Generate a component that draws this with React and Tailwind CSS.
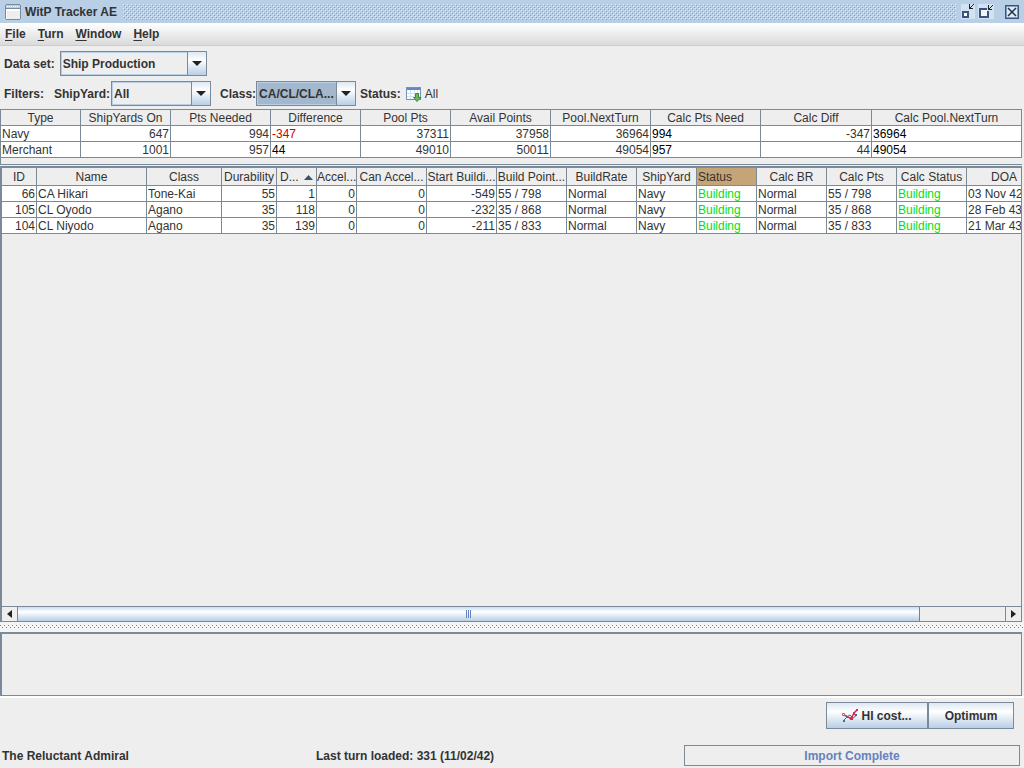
import { useState } from 'react';

const POOL_COLUMNS = [
    { label: 'Type', width: 'w-[80px]' },
    { label: 'ShipYards On', width: 'w-[90px]', align: 'right' },
    { label: 'Pts Needed', width: 'w-[100px]', align: 'right' },
    { label: 'Difference', width: 'w-[90px]' },
    { label: 'Pool Pts', width: 'w-[90px]', align: 'right' },
    { label: 'Avail Points', width: 'w-[100px]', align: 'right' },
    { label: 'Pool.NextTurn', width: 'w-[100px]', align: 'right' },
    { label: 'Calc Pts Need', width: 'w-[110px]', color: 'text-black' },
    { label: 'Calc Diff', width: 'w-[111px]', align: 'right' },
    { label: 'Calc Pool.NextTurn', width: '', color: 'text-black' },
];

const POOL_ROWS = [
    ['Navy', '647', '994', '-347', '37311', '37958', '36964', '994', '-347', '36964'],
    ['Merchant', '1001', '957', '44', '49010', '50011', '49054', '957', '44', '49054'],
];

const SHIP_COLUMNS = [
    { label: 'ID', width: 'w-[35px]', align: 'right' },
    { label: 'Name', width: 'w-[110px]' },
    { label: 'Class', width: 'w-[75px]' },
    { label: 'Durability', width: 'w-[55px]', align: 'right' },
    { label: 'D...', width: 'w-[40px]', align: 'right', sorted: true },
    { label: 'Accel...', width: 'w-[40px]', align: 'right' },
    { label: 'Can Accel...', width: 'w-[70px]', align: 'right' },
    { label: 'Start Buildi...', width: 'w-[70px]', align: 'right' },
    { label: 'Build Point...', width: 'w-[70px]' },
    { label: 'BuildRate', width: 'w-[70px]' },
    { label: 'ShipYard', width: 'w-[60px]' },
    { label: 'Status', width: 'w-[60px]', color: 'text-[#00e020]', filtered: true },
    { label: 'Calc BR', width: 'w-[70px]' },
    { label: 'Calc Pts', width: 'w-[70px]' },
    { label: 'Calc Status', width: 'w-[70px]', color: 'text-[#00e020]' },
    { label: 'DOA', width: 'w-[75px]' },
];

const SHIP_ROWS = [
    ['66', 'CA Hikari', 'Tone-Kai', '55', '1', '0', '0', '-549', '55 / 798', 'Normal', 'Navy', 'Building', 'Normal', '55 / 798', 'Building', '03 Nov 42'],
    ['105', 'CL Oyodo', 'Agano', '35', '118', '0', '0', '-232', '35 / 868', 'Normal', 'Navy', 'Building', 'Normal', '35 / 868', 'Building', '28 Feb 43'],
    ['104', 'CL Niyodo', 'Agano', '35', '139', '0', '0', '-211', '35 / 833', 'Normal', 'Navy', 'Building', 'Normal', '35 / 833', 'Building', '21 Mar 43'],
];

const MENUS = ['File', 'Turn', 'Window', 'Help'];

function TitleBar() {
    return (
        <header className="flex h-[23px] items-center bg-[#b8cfe5] pl-[5px] pr-1">
            <svg width="16" height="16" viewBox="0 0 16 16" shapeRendering="crispEdges" aria-hidden="true">
                <path d="M1 0h14v1h1v14h-1v1H1v-1H0V1h1z" fill="#7a8a99" />
                <rect x="1" y="1" width="14" height="3" fill="#b8cfe5" />
                <path d="M2 2.500h1M4 2.500h1M6 2.500h1M8 2.500h1M10 2.500h1M12 2.500h1" stroke="#fff" />
                <rect x="1" y="5" width="14" height="10" fill="#fff" />
                <rect x="2" y="7" width="13" height="8" fill="#eee" />
            </svg>
            <h1 className="ml-1 text-[12px] font-bold leading-4">WitP Tracker AE</h1>
            {/* drag bumps */}
            <div className="ml-[6px] mr-1 h-4 flex-1 [background-image:conic-gradient(from_270deg_at_1px_1px,#e4eefa_90deg,transparent_0),conic-gradient(from_270deg_at_1px_1px,#e4eefa_90deg,transparent_0),conic-gradient(from_270deg_at_1px_1px,#7f9fcb_90deg,transparent_0),conic-gradient(from_270deg_at_1px_1px,#7f9fcb_90deg,transparent_0)] [background-position:0_0,2px_2px,1px_1px,3px_3px] [background-size:4px_4px]" />
            <div className="flex items-center">
                <button type="button" aria-label="Minimize">
                    <svg width="16" height="16" viewBox="0 0 16 16" shapeRendering="crispEdges">
                        <rect x="1" y="0" width="14" height="15" fill="#d3e2f2" />
                        <rect x="3" y="8" width="5" height="5" fill="#fff" stroke="#39537f" strokeWidth="2" />
                        <path d="M9 0h1v3h1v-1h1v-1h1v-1h1v1h-1v1h-1v1h-1v1h2v1h-4z" fill="#222" />
                    </svg>
                </button>
                <button type="button" aria-label="Maximize" className="ml-[2px]">
                    <svg width="16" height="16" viewBox="0 0 16 16" shapeRendering="crispEdges">
                        <rect x="0" y="0" width="16" height="15" fill="#d3e2f2" />
                        <path d="M2 5h7M2 4v10M1 13h10M10 14V7" fill="none" stroke="#39537f" strokeWidth="2" />
                        <rect x="3" y="6" width="6" height="6" fill="#f2f6fb" />
                        <path d="M10 1h1v3h1v-1h1v-1h1v-1h1v1h-1v1h-1v1h-1v1h2v1h-4z" fill="#222" />
                    </svg>
                </button>
                <button type="button" aria-label="Close" className="ml-[10px]">
                    <svg width="16" height="16" viewBox="0 0 16 16" shapeRendering="crispEdges">
                        <rect x="1.500" y="1.500" width="13" height="13" fill="#dfeaf5" stroke="#39537f" />
                        <rect x="2.500" y="2.500" width="11" height="11" fill="none" stroke="#7f9bbd" />
                        <path d="M4 4l8 8M12 4l-8 8" stroke="#222f3f" strokeWidth="1.500" shapeRendering="auto" />
                    </svg>
                </button>
            </div>
        </header>
    );
}

function MenuBar() {
    return (
        <nav className="flex h-[23px] items-center gap-3 border-b border-[#ccc] bg-linear-to-b from-white to-[#dadada] pl-[5px]">
            {MENUS.map(menu => (
                <button key={menu} type="button" className="font-bold leading-4">
                    <span className="underline underline-offset-2">{menu[0]}</span>{menu.slice(1)}
                </button>
            ))}
        </nav>
    );
}

function ComboBox({ id, options, className, focused }) {
    const [value, setValue] = useState(options[0]);
    return (
        <div className={`relative h-[25px] border border-[#7a8a99] ${className}`}>
            <select
                id={id}
                value={value}
                onChange={e => setValue(e.target.value)}
                className={`h-full w-full appearance-none border border-[#b8cfe5] pl-px pr-5 font-bold outline-none ${focused ? 'bg-[#a3b8cc]' : 'bg-[#eee]'}`}
            >
                {options.map(option => <option key={option}>{option}</option>)}
            </select>
            <span className="pointer-events-none absolute inset-y-0 right-0 flex w-[19px] items-center justify-center border-l border-[#7a8a99] bg-linear-to-b from-[#dde8f3] via-white via-35% to-[#b8cfe5]">
                <svg width="10" height="5" viewBox="0 0 10 5" aria-hidden="true">
                    <path d="M0 0h10L5 5z" fill="#222" />
                </svg>
            </span>
        </div>
    );
}

function DataTable({ columns, rows, label, headHeight, className }) {
    return (
        <table aria-label={label} className={`table-fixed border-separate border-spacing-0 ${className}`}>
            <thead>
                <tr>
                    {columns.map(col => (
                        <th
                            key={col.label}
                            scope="col"
                            className={`overflow-hidden whitespace-nowrap border-b border-r border-[#7a8a99] px-0 pt-[2px] pb-0 font-normal leading-[13px] ${headHeight} ${col.width} ${col.filtered ? 'bg-[#c5a577] pl-px text-left' : 'bg-[#eee] text-center'}`}
                        >
                            {col.sorted ? (
                                <span className="flex items-center justify-between px-[3px]">
                                    {col.label}
                                    <svg width="9" height="5" viewBox="0 0 9 5" aria-hidden="true">
                                        <path d="M0 5L4.500 0L9 5z" fill="#39536f" />
                                    </svg>
                                </span>
                            ) : col.label}
                        </th>
                    ))}
                </tr>
            </thead>
            <tbody>
                {rows.map(row => (
                    <tr key={row[0]}>
                        {row.map((cell, i) => {
                            const col = columns[i];
                            let color = col.color || '';
                            if (col.label === 'Difference') color = Number(cell) < 0 ? 'text-[#cc0000]' : 'text-black';
                            return (
                                <td
                                    key={col.label}
                                    className={`h-4 whitespace-nowrap border-b border-r border-[#7a8a99] bg-white px-px pt-px pb-0 leading-[14px] ${col.align === 'right' ? 'text-right' : 'text-left'} ${color}`}
                                >
                                    {cell}
                                </td>
                            );
                        })}
                    </tr>
                ))}
            </tbody>
        </table>
    );
}

function ScrollBar() {
    return (
        <div className="flex h-4 border-y border-[#7a8a99] bg-[#eee]">
            <button type="button" aria-label="Scroll left" className="flex w-4 items-center justify-center border-r border-[#7a8a99]">
                <svg width="5" height="8" viewBox="0 0 5 8"><path d="M5 0v8L0 4z" fill="#222" /></svg>
            </button>
            <div className="flex flex-1 pr-[85px]">
                <div className="flex flex-1 items-center justify-center gap-px border-r border-[#6382bf] bg-linear-to-b from-[#c8ddf2] via-white via-35% to-[#b8cfe5]">
                    <span className="h-2 w-px bg-[#6382bf]" />
                    <span className="h-2 w-px bg-[#6382bf]" />
                    <span className="h-2 w-px bg-[#6382bf]" />
                </div>
            </div>
            <button type="button" aria-label="Scroll right" className="flex w-4 items-center justify-center border-l border-[#7a8a99]">
                <svg width="5" height="8" viewBox="0 0 5 8"><path d="M0 0v8L5 4z" fill="#222" /></svg>
            </button>
        </div>
    );
}

function Filters() {
    return (
        <section className="flex flex-col gap-[5px] px-1 pt-[5px] pb-[3px] font-bold">
            <div className="flex items-center gap-[5px]">
                <label htmlFor="dataset">Data set:</label>
                <ComboBox id="dataset" className="w-[147px]" options={['Ship Production', 'Ships', 'Air Groups']} />
            </div>
            <div className="flex items-center">
                <span>Filters:</span>
                <label htmlFor="shipyard" className="ml-[10px] mr-px">ShipYard:</label>
                <ComboBox id="shipyard" className="w-[100px]" options={['All', 'Navy', 'Merchant']} />
                <label htmlFor="shipclass" className="ml-[9px]">Class:</label>
                <ComboBox id="shipclass" className="w-[100px]" options={['CA/CL/CLA...', 'All']} focused />
                <span className="ml-1">Status:</span>
                <button type="button" className="ml-[5px] flex items-center gap-[3px] font-normal">
                    <svg width="16" height="16" viewBox="0 0 16 16" aria-hidden="true">
                        <rect x="0.500" y="1.500" width="14" height="12" fill="#fff" stroke="#6f93bd" />
                        <rect x="1" y="2" width="13" height="2" fill="#5b8ac4" />
                        <path d="M1 7.500h13M1 10.500h13M4.500 4v9M8.500 4v9M11.500 4v9" stroke="#d5e2f2" />
                        <path d="M9.500 7.500h3v4h2.500L11 15.500L7.500 11.500h2z" fill="#6cb657" stroke="#3c8a35" />
                    </svg>
                    All
                </button>
            </div>
        </section>
    );
}

export default function App() {
    return (
        <div className="flex min-h-screen flex-col overflow-hidden bg-[#eee] font-['Liberation_Sans',Arial,sans-serif] text-[12px] leading-4 text-[#333]">
            <TitleBar />
            <MenuBar />
            <Filters />

            <main className="flex flex-1 flex-col">
                <section className="mr-[2px] border border-r-0 border-[#7a8a99] pb-[6px]">
                    <DataTable label="Shipyard pool" columns={POOL_COLUMNS} rows={POOL_ROWS} headHeight="h-4" className="w-full" />
                </section>

                <section className="mr-[2px] mt-px flex flex-1 flex-col border-2 border-r border-b-0 border-[#7a8a99]">
                    <div className="flex-1 overflow-hidden">
                        <DataTable label="Ships in production" columns={SHIP_COLUMNS} rows={SHIP_ROWS} headHeight="h-[18px]" className="w-[1040px]" />
                    </div>
                    <ScrollBar />
                </section>

                {/* split pane divider */}
                <div className="flex h-[10px] items-center bg-[#f4f4f4]">
                    <div className="h-1 w-full [background-image:conic-gradient(from_270deg_at_1px_1px,#7a8a99_90deg,transparent_0),conic-gradient(from_270deg_at_1px_1px,#7a8a99_90deg,transparent_0)] [background-position:0_0,2px_2px] [background-size:4px_4px]" />
                </div>

                <section aria-label="Details" className="mr-[2px] h-16 border-2 border-r border-b border-[#7a8a99]" />
                <div className="h-[2px] bg-white" />
            </main>

            <div className="flex justify-end px-[10px] pt-1">
                <button type="button" className="flex h-[27px] w-[102px] items-center justify-center gap-[3px] border border-[#7a8a99] bg-linear-to-b from-[#dde8f3] via-white via-35% to-[#b8cfe5] font-bold">
                    <svg width="16" height="16" viewBox="0 0 16 16" fill="none" aria-hidden="true">
                        <path d="M1 13L5 9L8 7L11 10L15 7" stroke="#3f6c9c" />
                        <path d="M2 7L6 9L9 11L12 5L15 2" stroke="#e0284c" strokeWidth="1.500" />
                        <path d="M0.500 5.500h2v2h-2z" fill="#fff" stroke="#c8604c" />
                        <path d="M4 8h2v2h-2zM13 6h2v2h-2zM1 12h2v2h-2z" fill="#3f6c9c" />
                        <path d="M8 9h3v3h-3zM11 4h2v3h-2zM14 1h2v2h-2z" fill="#e0284c" />
                    </svg>
                    HI cost...
                </button>
                <button type="button" className="h-[27px] w-[86px] border border-[#7a8a99] bg-linear-to-b from-[#dde8f3] via-white via-35% to-[#b8cfe5] font-bold">
                    Optimum
                </button>
            </div>

            <footer className="mt-4 mb-[2px] grid grid-cols-[314px_1fr_336px] items-center pl-[2px] pr-1 font-bold">
                <span>The Reluctant Admiral</span>
                <span>Last turn loaded: 331 (11/02/42)</span>
                <div role="status" className="flex h-[21px] items-center justify-center border border-[#7a8a99] text-[#6382bf]">
                    Import Complete
                </div>
            </footer>
        </div>
    );
}
